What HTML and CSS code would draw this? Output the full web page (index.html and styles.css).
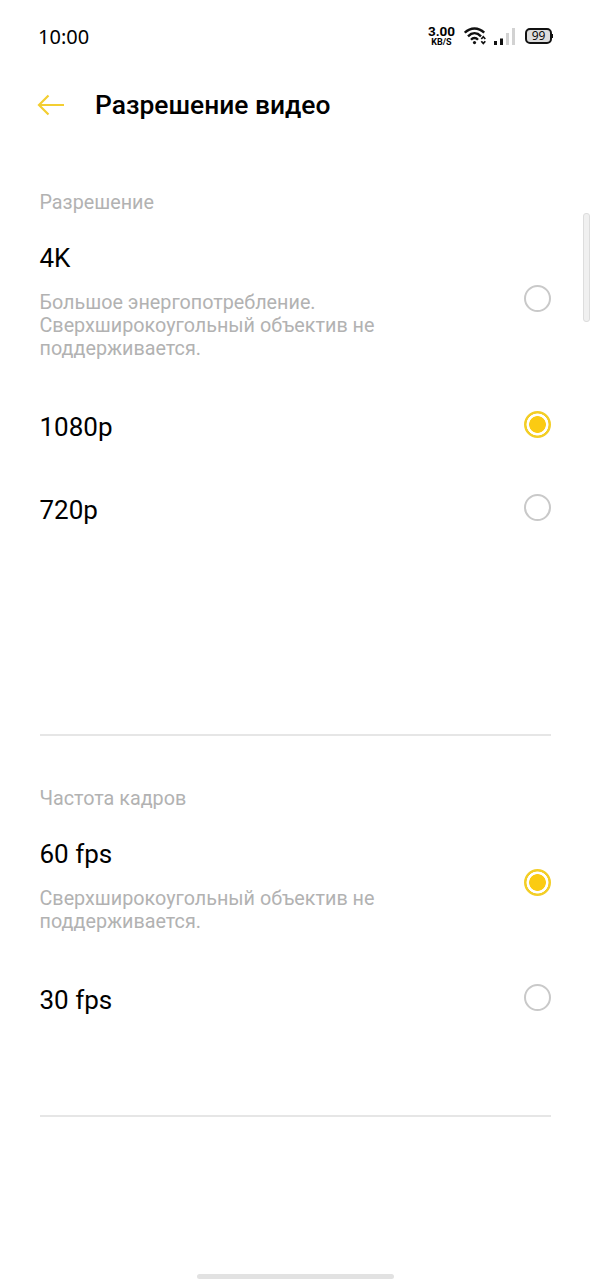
FILE: index.html
```html
<!DOCTYPE html>
<html lang="ru">
<head>
<meta charset="utf-8">
<title>Разрешение видео</title>
<link rel="stylesheet" href="styles.css">
</head>
<body>
<div class="screen">
  <header class="status">
    <span class="time">10:00</span>
    <div class="tray">
      <div class="speed"><span class="speed-value">3.00</span><span class="speed-unit">KB/S</span></div>
      <svg class="wifi" width="23" height="20" viewBox="0 0 23 20" fill="none" stroke="#111" stroke-width="2.400">
        <path d="M0.800 6.700C6.500 1.100 14.500 1.100 20.200 6.700"/><path d="M4 10.300C8 6.300 13 6.300 17 10.300"/><path d="M7 13.700C9 11.500 12 11.500 14 13.700"/>
        <circle cx="10.500" cy="16.600" r="1.600" fill="#111" stroke="none"/>
        <path d="M17.300 13l2-2.200 2 2.200M17.300 15.200l2 2.200 2-2.200" stroke-width="1.700"/>
      </svg>
      <svg class="signal" width="22" height="18" viewBox="0 0 22 18"><path d="M0 14h3v4H0zM6 11.500h3V18H6z" fill="#111"/><path d="M12 6h3v12h-3zM18 1h3v17h-3z" fill="#d2d2d2"/></svg>
      <div class="battery">99</div>
    </div>
  </header>
  <div class="titlebar">
    <svg class="back" width="28" height="22" viewBox="0 0 28 22" fill="none" stroke="#f3ce31" stroke-width="2.200"><path d="M27 11H2M11.500 1.500L2 11l9.500 9.500"/></svg>
    <h1 class="title">Разрешение видео</h1>
  </div>
  <main class="content">
    <section class="group resolution">
      <h2 class="label">Разрешение</h2>
      <div class="option tall"><div><div class="name">4K</div><p class="note">Большое энергопотребление.<br>Сверхширокоугольный объектив не<br>поддерживается.</p></div><i class="radio"></i></div>
      <div class="option"><div class="name single">1080p</div><i class="radio on"></i></div>
      <div class="option"><div class="name single">720p</div><i class="radio"></i></div>
    </section>
    <section class="group rate">
      <h2 class="label">Частота кадров</h2>
      <div class="option medium"><div><div class="name">60 fps</div><p class="note">Сверхширокоугольный объектив не<br>поддерживается.</p></div><i class="radio on"></i></div>
      <div class="option"><div class="name single">30 fps</div><i class="radio"></i></div>
    </section>
  </main>
  <div class="scrollbar"></div>
  <div class="home"></div>
</div>
</body>
</html>
```
FILE: styles.css
```css
* { box-sizing: border-box; }
body { margin: 0; background: #fff; color: #000; font-family: Roboto, sans-serif; }
.screen { position: relative; width: 590px; height: 1280px; overflow: hidden; }
.status { height: 72px; padding: 2px 38px 0 38px; display: flex; justify-content: space-between; align-items: center; }
.time { font-family: "Noto Sans", sans-serif; font-size: 20px; line-height: 24px; }
.tray { display: flex; align-items: center; padding-bottom: 2px; }
.speed { width: 27px; display: flex; flex-direction: column; align-items: center; font-weight: 700; margin-right: 9px; }
.speed-value { font-size: 13.500px; line-height: 12px; }
.speed-unit { font-size: 9px; line-height: 10px; }
.signal { margin: 0 9px 0 7px; }
.battery { position: relative; width: 27px; height: 16px; border: 2px solid #111; border-radius: 5px; background: #ddd; font-family: "Open Sans", sans-serif; font-weight: 400; font-size: 12px; line-height: 12px; text-align: center; }
.battery::after { content: ""; position: absolute; right: -3px; top: 4px; width: 1px; height: 4px; background: #111; }
.titlebar { height: 66px; padding-left: 37px; display: flex; align-items: center; }
.back { margin-right: 30px; }
.title { margin: 0; font-size: 26.400px; line-height: 32px; font-weight: 500; }
.content { padding: 0 39.500px; }
.group { border-bottom: 2px solid #e6e6e6; }
.resolution { height: 598px; padding-top: 52px; }
.rate { height: 381px; padding-top: 50px; }
.label { margin: 0; padding-top: 1px; height: 24px; font-size: 19.750px; line-height: 24px; font-weight: 400; color: #b2b2b2; }
.option { height: 83px; display: flex; justify-content: space-between; align-items: center; }
.tall { height: 169px; }
.medium { height: 146px; }
.tall > div, .medium > div { padding-top: 4px; }
.name { font-size: 26px; line-height: 32px; }
.single { padding-top: 4px; }
.note { margin: 17px 0 0; font-size: 19.750px; line-height: 23px; color: #b2b2b2; }
.radio { width: 27px; height: 27px; border: 2px solid #c9c9c9; border-radius: 50%; flex: none; margin-top: -1px; }
.radio.on { border-color: #f3ce26; background: radial-gradient(circle, #fbcb12 8px, #fff 8.700px 10.700px, #f3ce26 11.300px); }
.scrollbar { position: absolute; left: 583px; top: 213px; width: 7px; height: 109px; border-radius: 3px; background: #f0f0f0; border: 1px solid #ddd; }
.home { position: absolute; left: 197px; top: 1274px; width: 197px; height: 5px; border-radius: 3px; background: #e2e2e2; }
```
